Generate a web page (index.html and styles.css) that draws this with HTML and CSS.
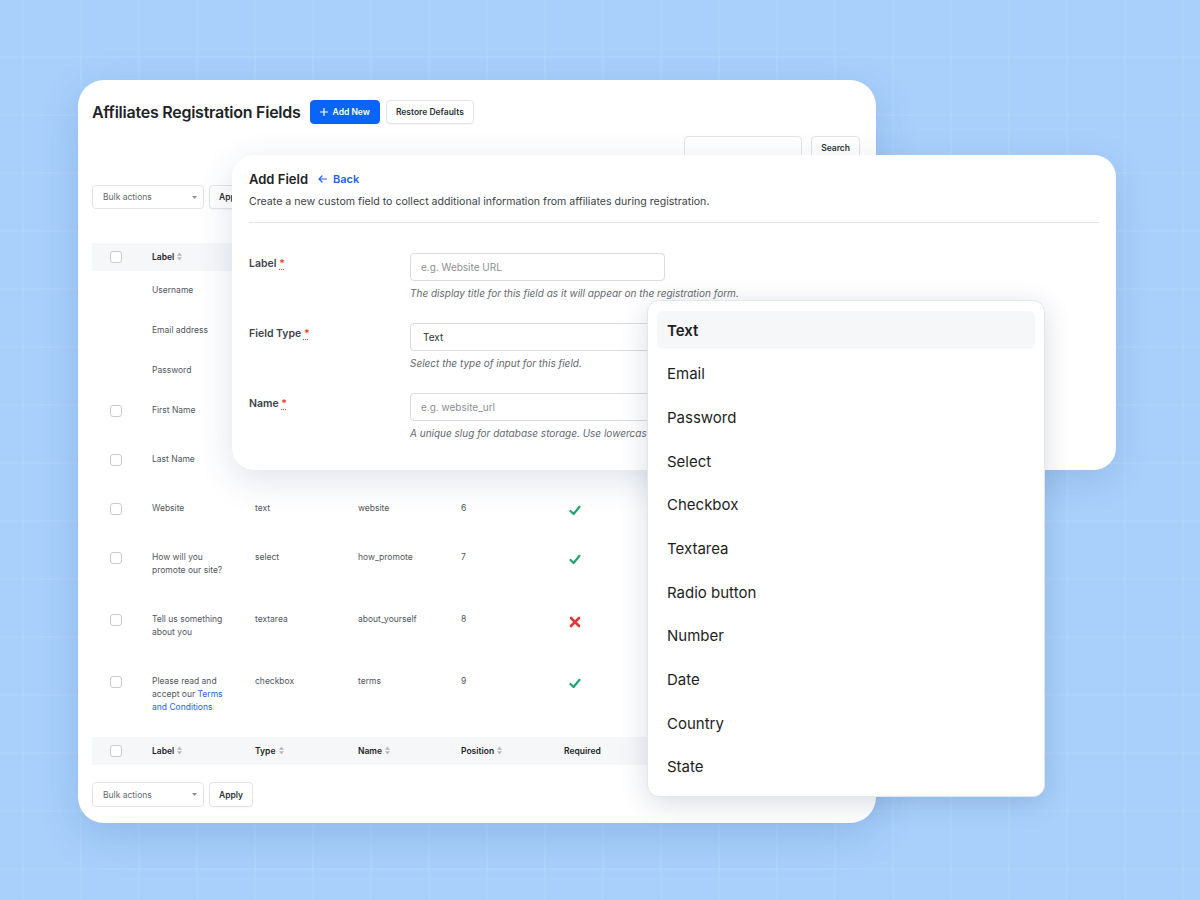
FILE: index.html
```html
<!DOCTYPE html>
<html lang="en">
<head>
    <meta charset="UTF-8">
    <meta name="viewport" content="width=device-width, initial-scale=1.0">
    <title>Affiliates Registration Fields</title>
    <link rel="stylesheet" href="styles.css">
</head>
<body>

<div class="stage">

    <!-- Registration fields list -->
    <div class="panel list-panel">
        <div class="page-head">
            <h1>Affiliates Registration Fields</h1>
            <button class="btn btn-primary">
                <svg width="8" height="8" viewBox="0 0 8 8"><path d="M4 0.5v7M0.5 4h7" stroke="#fff" stroke-width="1.2" stroke-linecap="round"/></svg>
                Add New
            </button>
            <button class="btn">Restore Defaults</button>
        </div>

        <div class="search-row">
            <input class="search-input" type="text">
            <button class="btn">Search</button>
        </div>

        <div class="bulk-row">
            <div class="select">
                Bulk actions
                <svg width="5" height="3" viewBox="0 0 5 3"><path d="M0 0h5L2.5 3z" fill="#8c8f94"/></svg>
            </div>
            <button class="btn">Apply</button>
        </div>

        <table class="fields-table">
            <colgroup>
                <col class="w-cb">
                <col class="w-col">
                <col class="w-col">
                <col class="w-col">
                <col class="w-col">
                <col class="w-col">
                <col>
            </colgroup>
            <thead>
                <tr>
                    <th class="col-cb"><span class="cb"></span></th>
                    <th>Label <svg class="sort" width="5" height="9" viewBox="0 0 5 9"><path d="M0 3.8L2.5 0.5L5 3.8zM0 5.2L2.5 8.5L5 5.2z"/></svg></th>
                    <th>Type <svg class="sort" width="5" height="9" viewBox="0 0 5 9"><path d="M0 3.8L2.5 0.5L5 3.8zM0 5.2L2.5 8.5L5 5.2z"/></svg></th>
                    <th>Name <svg class="sort" width="5" height="9" viewBox="0 0 5 9"><path d="M0 3.8L2.5 0.5L5 3.8zM0 5.2L2.5 8.5L5 5.2z"/></svg></th>
                    <th>Position <svg class="sort" width="5" height="9" viewBox="0 0 5 9"><path d="M0 3.8L2.5 0.5L5 3.8zM0 5.2L2.5 8.5L5 5.2z"/></svg></th>
                    <th>Required</th>
                    <th>Actions</th>
                </tr>
            </thead>
            <tbody>
                <tr>
                    <td class="col-cb"></td>
                    <td>Username</td>
                    <td>text</td>
                    <td>username</td>
                    <td>1</td>
                    <td><svg class="icon-yes" width="12" height="11" viewBox="0 0 12 11"><path d="M1.5 6L4.6 9L10.5 1.8"/></svg></td>
                    <td></td>
                </tr>
                <tr>
                    <td class="col-cb"></td>
                    <td>Email address</td>
                    <td>email</td>
                    <td>email</td>
                    <td>2</td>
                    <td><svg class="icon-yes" width="12" height="11" viewBox="0 0 12 11"><path d="M1.5 6L4.6 9L10.5 1.8"/></svg></td>
                    <td></td>
                </tr>
                <tr>
                    <td class="col-cb"></td>
                    <td>Password</td>
                    <td>password</td>
                    <td>password</td>
                    <td>3</td>
                    <td><svg class="icon-yes" width="12" height="11" viewBox="0 0 12 11"><path d="M1.5 6L4.6 9L10.5 1.8"/></svg></td>
                    <td></td>
                </tr>
                <tr>
                    <td class="col-cb"><span class="cb"></span></td>
                    <td>First Name<div class="row-actions">Edit | Delete</div></td>
                    <td>text</td>
                    <td>first_name</td>
                    <td>4</td>
                    <td><svg class="icon-yes" width="12" height="11" viewBox="0 0 12 11"><path d="M1.5 6L4.6 9L10.5 1.8"/></svg></td>
                    <td></td>
                </tr>
                <tr>
                    <td class="col-cb"><span class="cb"></span></td>
                    <td>Last Name<div class="row-actions">Edit | Delete</div></td>
                    <td>text</td>
                    <td>last_name</td>
                    <td>5</td>
                    <td><svg class="icon-yes" width="12" height="11" viewBox="0 0 12 11"><path d="M1.5 6L4.6 9L10.5 1.8"/></svg></td>
                    <td></td>
                </tr>
                <tr>
                    <td class="col-cb"><span class="cb"></span></td>
                    <td>Website<div class="row-actions">Edit | Delete</div></td>
                    <td>text</td>
                    <td>website</td>
                    <td>6</td>
                    <td><svg class="icon-yes" width="12" height="11" viewBox="0 0 12 11"><path d="M1.5 6L4.6 9L10.5 1.8"/></svg></td>
                    <td></td>
                </tr>
                <tr>
                    <td class="col-cb"><span class="cb"></span></td>
                    <td>How will you promote our site?<div class="row-actions">Edit | Delete</div></td>
                    <td>select</td>
                    <td>how_promote</td>
                    <td>7</td>
                    <td><svg class="icon-yes" width="12" height="11" viewBox="0 0 12 11"><path d="M1.5 6L4.6 9L10.5 1.8"/></svg></td>
                    <td></td>
                </tr>
                <tr>
                    <td class="col-cb"><span class="cb"></span></td>
                    <td>Tell us something about you<div class="row-actions">Edit | Delete</div></td>
                    <td>textarea</td>
                    <td>about_yourself</td>
                    <td>8</td>
                    <td><svg class="icon-no" width="12" height="12" viewBox="0 0 12 12"><path d="M2 2L10 10M10 2L2 10"/></svg></td>
                    <td></td>
                </tr>
                <tr>
                    <td class="col-cb"><span class="cb"></span></td>
                    <td>Please read and accept our <a href="#">Terms and Conditions</a><div class="row-actions">Edit | Delete</div></td>
                    <td>checkbox</td>
                    <td>terms</td>
                    <td>9</td>
                    <td><svg class="icon-yes" width="12" height="11" viewBox="0 0 12 11"><path d="M1.5 6L4.6 9L10.5 1.8"/></svg></td>
                    <td></td>
                </tr>
            </tbody>
            <tfoot>
                <tr>
                    <th class="col-cb"><span class="cb"></span></th>
                    <th>Label <svg class="sort" width="5" height="9" viewBox="0 0 5 9"><path d="M0 3.8L2.5 0.5L5 3.8zM0 5.2L2.5 8.5L5 5.2z"/></svg></th>
                    <th>Type <svg class="sort" width="5" height="9" viewBox="0 0 5 9"><path d="M0 3.8L2.5 0.5L5 3.8zM0 5.2L2.5 8.5L5 5.2z"/></svg></th>
                    <th>Name <svg class="sort" width="5" height="9" viewBox="0 0 5 9"><path d="M0 3.8L2.5 0.5L5 3.8zM0 5.2L2.5 8.5L5 5.2z"/></svg></th>
                    <th>Position <svg class="sort" width="5" height="9" viewBox="0 0 5 9"><path d="M0 3.8L2.5 0.5L5 3.8zM0 5.2L2.5 8.5L5 5.2z"/></svg></th>
                    <th>Required</th>
                    <th>Actions</th>
                </tr>
            </tfoot>
        </table>

        <div class="bulk-row bulk-bottom">
            <div class="select">
                Bulk actions
                <svg width="5" height="3" viewBox="0 0 5 3"><path d="M0 0h5L2.5 3z" fill="#8c8f94"/></svg>
            </div>
            <button class="btn">Apply</button>
        </div>
    </div>

    <!-- Add field form -->
    <div class="panel add-panel">
        <div class="add-head">
            <div class="add-title">
                <h2>Add Field</h2>
                <a href="#" class="back-link">
                    <svg width="9" height="8" viewBox="0 0 9 8"><path d="M8.5 4H1M4 1L1 4L4 7" fill="none" stroke="#2463eb" stroke-width="1.2" stroke-linecap="round" stroke-linejoin="round"/></svg>
                    Back
                </a>
            </div>
            <p>Create a new custom field to collect additional information from affiliates during registration.</p>
        </div>

        <div class="form-rows">
            <div class="form-row">
                <label>Label <abbr title="required">*</abbr></label>
                <div>
                    <input class="field" type="text" placeholder="e.g. Website URL">
                    <p class="help">The display title for this field as it will appear on the registration form.</p>
                </div>
            </div>
            <div class="form-row">
                <label>Field Type <abbr title="required">*</abbr></label>
                <div>
                    <div class="field field-select">Text</div>
                    <p class="help">Select the type of input for this field.</p>
                </div>
            </div>
            <div class="form-row">
                <label>Name <abbr title="required">*</abbr></label>
                <div>
                    <input class="field" type="text" placeholder="e.g. website_url">
                    <p class="help">A unique slug for database storage. Use lowercase letters, numbers and underscores.</p>
                </div>
            </div>
        </div>
    </div>

    <!-- Field type dropdown -->
    <ul class="type-menu">
        <li class="selected">Text</li>
        <li>Email</li>
        <li>Password</li>
        <li>Select</li>
        <li>Checkbox</li>
        <li>Textarea</li>
        <li>Radio button</li>
        <li>Number</li>
        <li>Date</li>
        <li>Country</li>
        <li>State</li>
    </ul>

</div>

</body>
</html>
```

FILE: styles.css
```css
body {
    margin: 0;
    font-family: 'Inter', 'Noto Sans', sans-serif;
    color: #1d2327;
}

.stage {
    position: relative;
    width: 1200px;
    height: 900px;
    box-sizing: border-box;
    padding: 80px 0 0 78px;
    overflow: hidden;
    background-color: #a9d0fb;
    background-image:
        linear-gradient(rgba(255, 255, 255, 0.06) 2px, transparent 2px),
        linear-gradient(90deg, rgba(255, 255, 255, 0.06) 2px, transparent 2px);
    background-size: 58px 58px;
    background-position: 22px 56px;
}

.panel {
    background-color: #fff;
}

/* List panel */

.list-panel {
    width: 798px;
    box-sizing: border-box;
    padding: 20px 16px 16px 14px;
    border-radius: 26px;
    box-shadow: 0 12px 40px rgba(40, 90, 160, 0.2);
}

.page-head {
    display: flex;
    align-items: center;
    height: 24px;
}

.page-head h1 {
    margin: 0 9px 0 0;
    font-size: 16px;
    font-weight: 600;
    letter-spacing: -0.25px;
    color: #1d2327;
}

.btn {
    height: 24px;
    padding: 0 9px;
    font-family: inherit;
    font-size: 8.5px;
    font-weight: 600;
    color: #2c3338;
    background-color: #fff;
    border: 1px solid #e2e4e7;
    border-radius: 4px;
    box-shadow: 0 1px 2px rgba(0, 0, 0, 0.04);
    display: inline-flex;
    align-items: center;
    gap: 5px;
}

.btn-primary {
    background-color: #0a64f5;
    border-color: #0a64f5;
    color: #fff;
    margin-right: 6px;
}

.search-row {
    display: flex;
    justify-content: flex-end;
    gap: 9px;
    margin-top: 12px;
}

.search-input {
    width: 118px;
    height: 24px;
    box-sizing: border-box;
    border: 1px solid #e2e4e7;
    border-radius: 4px;
}

.bulk-row {
    display: flex;
    gap: 5px;
    margin-top: 25px;
}

.select {
    width: 112px;
    height: 24px;
    box-sizing: border-box;
    padding: 0 6px 0 10px;
    display: flex;
    align-items: center;
    justify-content: space-between;
    font-size: 8.5px;
    color: #646970;
    border: 1px solid #e2e4e7;
    border-radius: 4px;
}

.bulk-bottom {
    margin-top: 17px;
}

.bulk-bottom .select,
.bulk-bottom .btn {
    height: 25px;
}

/* Fields table */

.fields-table {
    width: 768px;
    margin-top: 34px;
    border-collapse: collapse;
    table-layout: fixed;
    font-size: 8.5px;
    line-height: 13px;
    color: #50575e;
}

.w-cb {
    width: 50px;
}

.w-col {
    width: 103px;
}

.fields-table th {
    height: 28px;
    padding: 0 10px;
    text-align: left;
    font-weight: 600;
    color: #1d2327;
    background-color: #f6f7f9;
}

.fields-table td {
    padding: 13px 10px;
    vertical-align: top;
}

.fields-table .col-cb {
    padding: 0 0 0 18px;
}

.fields-table td.col-cb {
    padding-top: 14px;
}

.cb {
    display: block;
    width: 12px;
    height: 12px;
    box-sizing: border-box;
    border: 1px solid #c8cacd;
    border-radius: 3px;
    background-color: #fff;
}

.sort {
    fill: #b5b8bc;
    vertical-align: -1px;
    margin-left: 1px;
}

.row-actions {
    visibility: hidden;
    height: 10px;
    line-height: 10px;
}

.fields-table a {
    color: #2463eb;
    text-decoration: none;
}

.icon-yes,
.icon-no {
    display: block;
    margin: 3px 0 0 5px;
    fill: none;
    stroke-linecap: round;
    stroke-linejoin: round;
}

.icon-yes {
    stroke: #1fa66a;
    stroke-width: 2.2;
}

.icon-no {
    stroke: #dc3a3a;
    stroke-width: 2.6;
}

/* Add field panel */

.add-panel {
    position: absolute;
    left: 232px;
    top: 155px;
    width: 884px;
    box-sizing: border-box;
    padding: 16px 17px 30px 17px;
    border-radius: 22px;
    box-shadow: 0 10px 36px rgba(30, 60, 110, 0.14);
}

.add-head {
    padding-bottom: 13px;
    border-bottom: 1px solid #e6e7e9;
}

.add-title {
    display: flex;
    align-items: center;
    gap: 10px;
    height: 16px;
}

.add-title h2 {
    margin: 0;
    font-size: 13px;
    font-weight: 600;
    color: #1d2327;
}

.back-link {
    display: inline-flex;
    align-items: center;
    gap: 6px;
    font-size: 11px;
    font-weight: 600;
    color: #2463eb;
    text-decoration: none;
}

.add-head p {
    margin: 8px 0 0;
    font-size: 10.6px;
    line-height: 14px;
    color: #3c434a;
}

.form-rows {
    display: flex;
    flex-direction: column;
    gap: 23px;
    padding-top: 30px;
}

.form-row {
    display: grid;
    grid-template-columns: 161px 1fr;
}

.form-row label {
    padding-top: 4px;
    font-size: 10.5px;
    line-height: 14px;
    font-weight: 600;
    color: #3c434a;
}

abbr {
    color: #e0491f;
    text-decoration: underline dotted;
    text-underline-offset: 2px;
}

.field {
    display: block;
    width: 255px;
    height: 28px;
    box-sizing: border-box;
    padding: 0 10px;
    font-family: inherit;
    font-size: 10px;
    color: #2c3338;
    border: 1px solid #dcdcde;
    border-radius: 4px;
    background-color: #fff;
}

.field::placeholder {
    color: #8c8f94;
}

.field-select {
    display: flex;
    align-items: center;
    padding-left: 12px;
}

.help {
    margin: 6px 0 0;
    font-size: 10px;
    line-height: 13px;
    font-style: italic;
    color: #646970;
    white-space: nowrap;
}

/* Field type dropdown */

.type-menu {
    position: absolute;
    left: 647px;
    top: 300px;
    width: 398px;
    box-sizing: border-box;
    margin: 0;
    padding: 10px 9px 10px 9px;
    list-style: none;
    display: flex;
    flex-direction: column;
    gap: 5.7px;
    background-color: #fff;
    border: 1px solid #e4e6ea;
    border-radius: 12px;
    box-shadow: 0 6px 28px rgba(20, 40, 80, 0.16);
}

.type-menu li {
    height: 38px;
    padding-left: 10px;
    display: flex;
    align-items: center;
    font-size: 15px;
    color: #1e1e1e;
    border-radius: 6px;
}

.type-menu li.selected {
    font-weight: 600;
    background-color: #f6f7f9;
}
```
